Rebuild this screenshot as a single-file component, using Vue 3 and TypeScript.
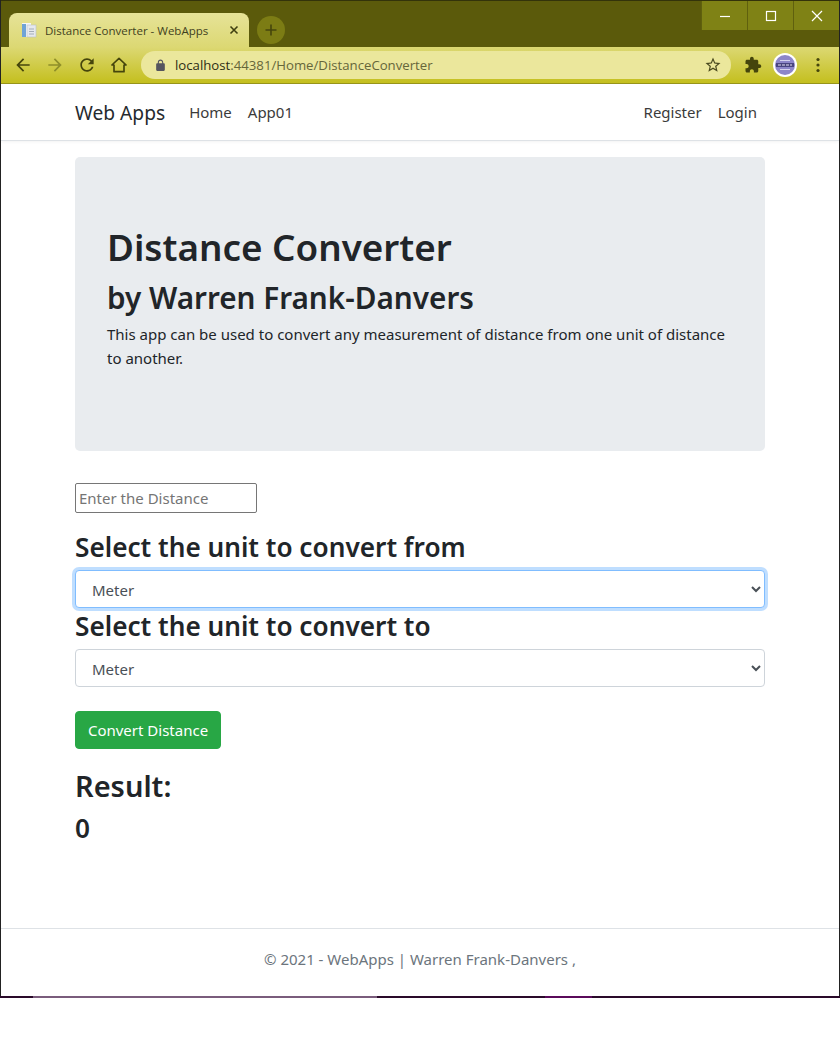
<script setup lang="ts">
const units = ['Meter', 'Kilometer', 'Centimeter', 'Millimeter', 'Mile', 'Yard', 'Foot', 'Inch']
</script>

<template>
  <div class="window">
    <div class="tabstrip">
      <div class="tab">
        <svg class="favicon" viewBox="0 0 16 16" width="16" height="16">
          <rect x="1" y="1" width="9" height="14" fill="#f4f6f8" />
          <rect x="1" y="2" width="4" height="13" fill="#6fa3d6" />
          <rect x="6" y="3" width="9" height="12" fill="#e6e9ee" stroke="#b9c0c9" stroke-width=".6" />
          <path d="M8 7h5M8 9.5h5M8 12h5" stroke="#a4adb8" stroke-width="1" />
        </svg>
        <span class="tab-title">Distance Converter - WebApps</span>
        <svg class="tab-close" viewBox="0 0 10 10" width="10" height="10">
          <path d="M1.5 1.5l7 7M8.5 1.5l-7 7" stroke="#3f3f10" stroke-width="1.6" />
        </svg>
      </div>
      <div class="new-tab">
        <svg viewBox="0 0 12 12" width="12" height="12">
          <path d="M6 0.5v11M0.5 6h11" stroke="#45450c" stroke-width="1.6" />
        </svg>
      </div>
      <div class="win-controls">
        <div class="win-btn">
          <svg viewBox="0 0 12 12" width="12" height="12"><path d="M1 6.5h10" stroke="#fff" stroke-width="1.2" /></svg>
        </div>
        <div class="win-btn">
          <svg viewBox="0 0 12 12" width="12" height="12"><rect x="1.5" y="1.5" width="9" height="9" fill="none" stroke="#fff" stroke-width="1.2" /></svg>
        </div>
        <div class="win-btn">
          <svg viewBox="0 0 12 12" width="12" height="12"><path d="M1 1l10 10M11 1L1 11" stroke="#fff" stroke-width="1.2" /></svg>
        </div>
      </div>
    </div>

    <div class="toolbar">
      <svg class="tool" viewBox="0 0 24 24" width="20" height="20">
        <path d="M20 11H7.83l5.59-5.59L12 4l-8 8 8 8 1.41-1.41L7.83 13H20v-2z" fill="#45450c" />
      </svg>
      <svg class="tool" viewBox="0 0 24 24" width="20" height="20">
        <path d="M12 4l-1.41 1.41L16.17 11H4v2h12.17l-5.58 5.59L12 20l8-8z" fill="#8f8f2a" />
      </svg>
      <svg class="tool" viewBox="0 0 24 24" width="20" height="20">
        <path d="M17.65 6.35C16.2 4.9 14.21 4 12 4c-4.42 0-7.99 3.58-7.99 8s3.57 8 7.99 8c3.73 0 6.84-2.55 7.73-6h-2.08c-.82 2.33-3.04 4-5.65 4-3.31 0-6-2.69-6-6s2.69-6 6-6c1.66 0 3.14.69 4.22 1.78L13 11h7V4l-2.35 2.35z" fill="#45450c" />
      </svg>
      <svg class="tool" viewBox="0 0 24 24" width="20" height="20">
        <path d="M12 4L3.5 12H6v8h12v-8h2.5L12 4z" fill="none" stroke="#45450c" stroke-width="2" stroke-linejoin="round" />
      </svg>
      <div class="omnibox">
        <svg viewBox="0 0 24 24" width="13" height="13">
          <path d="M18 8h-1V6c0-2.76-2.24-5-5-5S7 3.24 7 6v2H6c-1.1 0-2 .9-2 2v10c0 1.1.9 2 2 2h12c1.1 0 2-.9 2-2V10c0-1.1-.9-2-2-2zM9 6c0-1.66 1.34-3 3-3s3 1.34 3 3v2H9V6z" fill="#55555f" />
        </svg>
        <span class="url"><b>localhost</b>:44381/Home/DistanceConverter</span>
        <svg class="star" viewBox="0 0 24 24" width="18" height="18">
          <path d="M22 9.24l-7.19-.62L12 2 9.19 8.63 2 9.24l5.46 4.73L5.82 21 12 17.27 18.18 21l-1.63-7.03L22 9.24zM12 15.4l-3.76 2.27 1-4.28-3.32-2.88 4.38-.38L12 6.1l1.71 4.04 4.38.38-3.32 2.88 1 4.28L12 15.4z" fill="#4a4a20" />
        </svg>
      </div>
      <svg class="puzzle" viewBox="0 0 24 24" width="18" height="18">
        <path d="M20.5 11H19V7c0-1.1-.9-2-2-2h-4V3.5C13 2.12 11.88 1 10.5 1S8 2.12 8 3.5V5H4c-1.1 0-1.99.9-1.99 2v3.8H3.5c1.49 0 2.7 1.21 2.7 2.7s-1.21 2.7-2.7 2.7H2V20c0 1.1.9 2 2 2h3.8v-1.5c0-1.49 1.21-2.7 2.7-2.7 1.49 0 2.7 1.21 2.7 2.7V22H17c1.1 0 2-.9 2-2v-4h1.5c1.38 0 2.5-1.12 2.5-2.5S21.88 11 20.5 11z" fill="#45450c" />
      </svg>
      <svg class="avatar" viewBox="0 0 24 24" width="24" height="24">
        <circle cx="12" cy="12" r="12" fill="#fff" />
        <circle cx="12" cy="12" r="10" fill="#8d86c9" />
        <rect x="3" y="10" width="18" height="4" fill="#4a4580" />
        <path d="M5 12h3M9 12h3M13 12h3M17 12h2" stroke="#e2e0f2" stroke-width="1" />
        <path d="M7 7.5h10M7 16.5h10" stroke="#d6d3ee" stroke-width="1.2" />
      </svg>
      <svg class="menu" viewBox="0 0 4 16" width="4" height="16">
        <circle cx="2" cy="2.5" r="1.6" fill="#45450c" />
        <circle cx="2" cy="8" r="1.6" fill="#45450c" />
        <circle cx="2" cy="13.5" r="1.6" fill="#45450c" />
      </svg>
    </div>

    <nav class="navbar">
      <div class="container nav-inner">
        <a class="brand">Web Apps</a>
        <a class="nav-link">Home</a>
        <a class="nav-link">App01</a>
        <div class="nav-right">
          <a class="nav-link">Register</a>
          <a class="nav-link">Login</a>
        </div>
      </div>
    </nav>

    <main class="container main">
      <section class="jumbotron">
        <h1>Distance Converter</h1>
        <h2>by Warren Frank-Danvers</h2>
        <p>This app can be used to convert any measurement of distance from one unit of distance to another.</p>
      </section>

      <input class="distance" type="text" placeholder="Enter the Distance" />
      <h3>Select the unit to convert from</h3>
      <select class="unit focused">
        <option v-for="u in units" :key="u">{{ u }}</option>
      </select>
      <h3 class="tight">Select the unit to convert to</h3>
      <select class="unit">
        <option v-for="u in units" :key="u">{{ u }}</option>
      </select>
      <button class="convert" type="button">Convert Distance</button>
      <h2 class="result">Result:</h2>
      <h3 class="zero">0</h3>
    </main>

    <footer class="footer">© 2021 - WebApps | Warren Frank-Danvers ,</footer>
    <div class="taskbar-edge"></div>
  </div>
</template>

<style>
html,
body {
  background: #fff;
}
</style>

<style scoped>
.window {
  box-sizing: border-box;
  width: 840px;
  height: 998px;
  display: flex;
  flex-direction: column;
  border-left: 1px solid #222;
  border-right: 1px solid #222;
  font-family: "Noto Sans", "Open Sans", sans-serif;
  color: #212529;
  background: #fff;
}

.tabstrip {
  height: 47px;
  flex: none;
  display: flex;
  box-sizing: border-box;
  padding-left: 8px;
  background: #5b5a0b;
  border-top: 1px solid #33330a;
}

.tab {
  width: 240px;
  height: 34px;
  margin-top: 12px;
  display: flex;
  align-items: center;
  box-sizing: border-box;
  padding: 0 10px 0 12px;
  border-radius: 8px 8px 0 0;
  background: linear-gradient(#e6e398, #dcd873);
}

.favicon {
  flex: none;
}

.tab-title {
  flex: 1;
  margin-left: 8px;
  font-family: "Open Sans", sans-serif;
  font-size: 11.5px;
  color: #3f3f20;
  white-space: nowrap;
}

.new-tab {
  width: 28px;
  height: 28px;
  margin: 15px 0 0 8px;
  border-radius: 50%;
  background: #7c7c14;
  display: flex;
  align-items: center;
  justify-content: center;
}

.win-controls {
  margin-left: auto;
  display: flex;
  align-self: flex-start;
  height: 29px;
}

.win-btn {
  width: 46px;
  height: 29px;
  display: flex;
  align-items: center;
  justify-content: center;
  background: #7f8215;
  border-left: 1px solid #5f600e;
  box-sizing: border-box;
}

.toolbar {
  height: 37px;
  flex: none;
  display: flex;
  align-items: center;
  box-sizing: border-box;
  padding-left: 12px;
  background: linear-gradient(#dcd873, #c4bf1e);
  border-bottom: 1px solid #99961a;
}

.tool {
  flex: none;
  margin-right: 12px;
}

.omnibox {
  width: 590px;
  height: 28px;
  display: flex;
  align-items: center;
  box-sizing: border-box;
  padding: 0 9px 0 13px;
  border-radius: 14px;
  background: #ebe79c;
}

.url {
  flex: 1;
  margin-left: 8px;
  font-family: "Open Sans", sans-serif;
  font-size: 13.2px;
  color: #66663a;
}

.url b {
  font-weight: 400;
  color: #2e2e14;
}

.puzzle {
  margin-left: 13px;
}

.avatar {
  margin-left: 11px;
}

.menu {
  margin-left: 19px;
}

.container {
  box-sizing: border-box;
  width: 690px;
  margin: 0 auto;
}

.navbar {
  height: 57px;
  flex: none;
  box-sizing: border-box;
  border-bottom: 1px solid #dee2e6;
  box-shadow: 0 1px 3px rgba(0, 0, 0, 0.05);
  display: flex;
}

.nav-inner {
  display: flex;
  align-items: center;
}

.brand {
  font-size: 19.2px;
  margin-right: 16px;
  color: #262a2e;
}

.nav-link {
  padding: 0 8px;
  font-size: 15px;
  color: #3b3b3b;
}

.nav-right {
  margin-left: auto;
}

.main {
  padding-top: 16px;
  flex: 1;
}

.jumbotron {
  height: 294px;
  box-sizing: border-box;
  padding: 68px 32px 0;
  margin-bottom: 32px;
  border-radius: 5px;
  background: #e9ecef;
}

h1,
h2,
h3 {
  margin: 0;
  font-weight: 600;
  line-height: 1.2;
}

h1 {
  font-size: 36.8px;
  margin-bottom: 11px;
}

.jumbotron h2 {
  font-size: 29.7px;
  margin-bottom: 6px;
}

.jumbotron p {
  margin: 0;
  font-size: 15px;
  line-height: 24px;
}

.distance {
  display: block;
  box-sizing: border-box;
  width: 182px;
  height: 30px;
  padding: 0 3px;
  border: 1px solid #767676;
  border-radius: 2px;
  font: inherit;
  font-size: 15px;
}

.distance::placeholder {
  color: #757575;
}

h3 {
  font-size: 26.2px;
  height: 34px;
  line-height: 34px;
  margin-top: 17px;
  margin-bottom: 6px;
}

h3.tight {
  margin-top: 1px;
  margin-bottom: 6px;
}

.unit {
  display: block;
  box-sizing: border-box;
  width: 100%;
  height: 38px;
  padding: 7px 12px 5px;
  border: 1px solid #ced4da;
  border-radius: 4px;
  background: #fff;
  color: #495057;
  font: inherit;
  font-size: 15px;
}

.unit.focused {
  border-color: #80bdff;
  box-shadow: 0 0 0 3px rgba(0, 123, 255, 0.25);
}

.convert {
  display: block;
  width: 146px;
  height: 38px;
  margin-top: 24px;
  border: 1px solid #28a745;
  border-radius: 4px;
  background: #28a745;
  color: #fff;
  font: inherit;
  font-size: 15px;
}

h2.result {
  font-size: 29px;
  margin-top: 20px;
}

h3.zero {
  margin-top: 7px;
  margin-bottom: 0;
}

.footer {
  flex: none;
  height: 68px;
  box-sizing: border-box;
  border-top: 1px solid #dee2e6;
  padding-top: 20px;
  text-align: center;
  font-size: 15px;
  color: #6c757d;
}

.taskbar-edge {
  flex: none;
  height: 2px;
  margin: 0 -1px;
  background: linear-gradient(
    to right,
    #2a0a2a 33px,
    #7a5c7c 33px,
    #7a5c7c 377px,
    #2a0a2a 377px,
    #2a0a2a 545px,
    #5a0a5a 545px,
    #5a0a5a 592px,
    #2a0a2a 592px
  );
}
</style>
